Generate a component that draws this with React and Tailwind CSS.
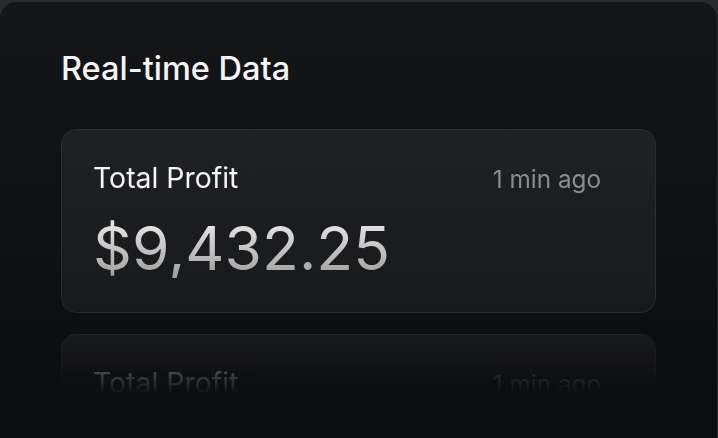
import React from "react";

const stats = [
  { label: "Total Profit", value: "$9,432.25", time: "1 min ago" },
  { label: "Total Profit", value: "$9,432.25", time: "1 min ago" },
];

function StatCard({ label, value, time }) {
  return (
    <div className="rounded-[15px] border border-[#2c2d30] bg-gradient-to-b from-[#202124] to-[#18191b] pl-[31px] pr-[54px] pt-[30px] pb-[34px]">
      <div className="flex items-baseline justify-between">
        <span className="text-[28.4px] leading-[36px] text-[#f4f4f5]">{label}</span>
        <span className="text-[24.3px] leading-[32px] text-[#8b8c90]">{time}</span>
      </div>
      <div className="mt-[22px] text-[60.6px] leading-[60px] bg-gradient-to-b from-[#ececec] to-[#9e9e9e] bg-clip-text text-transparent">
        {value}
      </div>
    </div>
  );
}

export default function App() {
  return (
    <div
      className="h-[438px] w-[718px] overflow-hidden bg-[#2a2b2e] pt-[2px]"
      style={{ fontFamily: "Inter, 'Noto Sans', sans-serif" }}
    >
      <div className="h-full mr-px rounded-t-[16px] bg-gradient-to-b from-[#151618] to-[#0b0c0d] px-[61px] pt-[47px]">
        <h2 className="text-[32.5px] leading-[40px] font-medium text-[#f5f5f6]">Real-time Data</h2>

        <div className="mt-[40px] flex h-[309px] flex-col gap-[21px] overflow-hidden [mask-image:linear-gradient(to_bottom,black_56%,transparent_86%)]">
          {stats.map((s, i) => (
            <StatCard key={i} {...s} />
          ))}
        </div>
      </div>
    </div>
  );
}
